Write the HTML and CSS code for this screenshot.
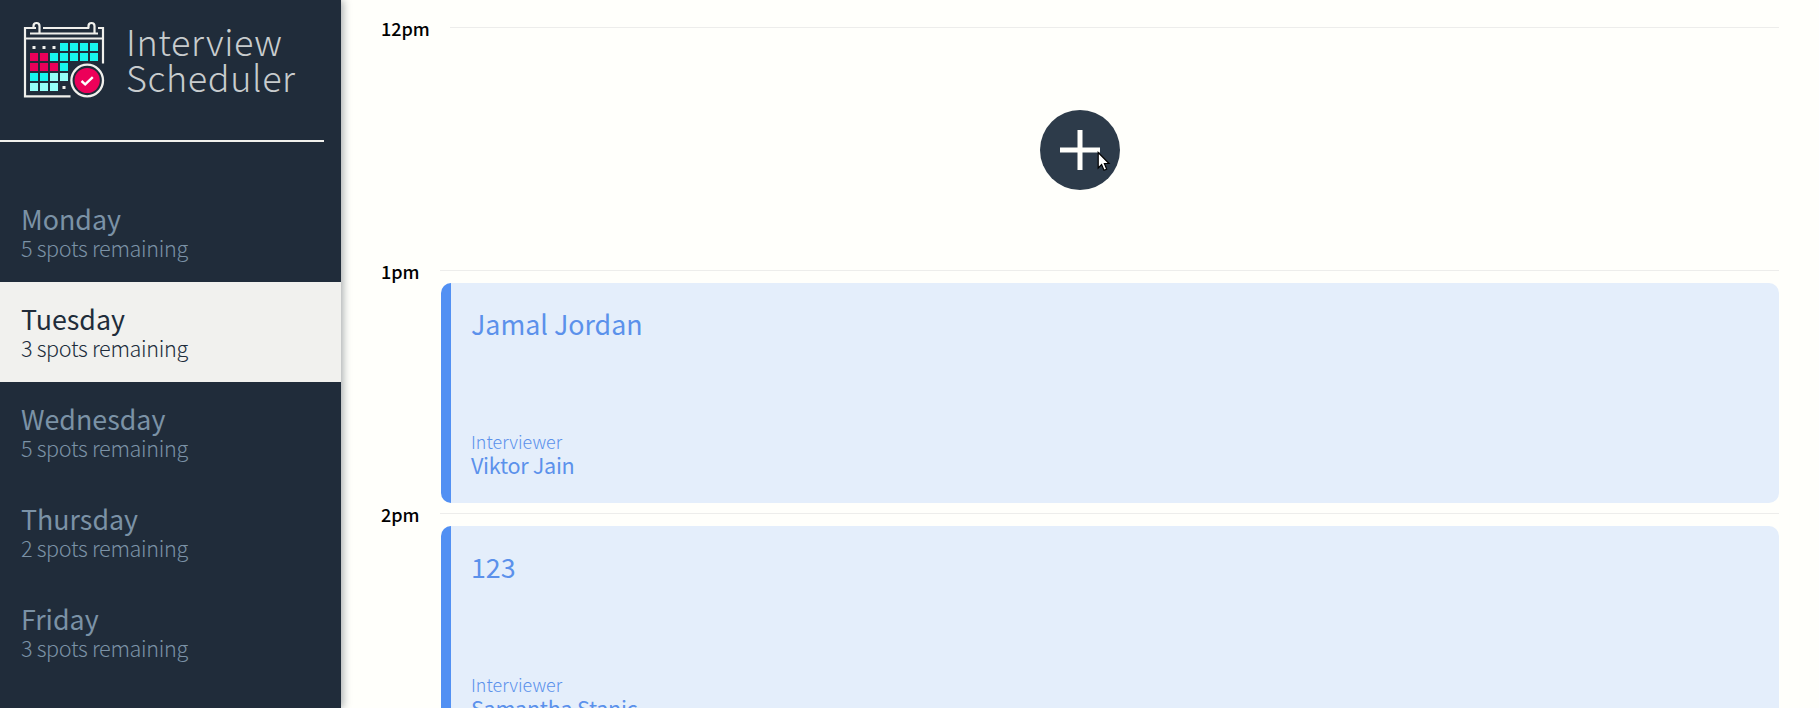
FILE: index.html
```html
<!DOCTYPE html>
<html lang="en">
<head>
<meta charset="utf-8">
<title>Interview Scheduler</title>
<link rel="stylesheet" href="styles.css">
</head>
<body>
<main class="layout">
  <section class="sidebar">
    <div class="logo">
      <svg class="logo-icon" width="82" height="78" viewBox="23 21 82 78">
        <g fill="none" stroke="#f0f0ec" stroke-width="2.200">
          <path d="M36 28H25V96.300H70.500M98 28H103V63.500M25 38.500H103"/>
          <path d="M43 28H89M30 33.500H98"/>
          <path d="M39.500 33V26A3 3 0 0 0 33.500 26V28.500M94.500 33V26A3 3 0 0 0 88.500 26V28.500"/>
        </g>
        <path fill="#f0f0ec" d="M32.500 46h3v3h-3zM42.500 46h3v3h-3zM52.500 46h3v3h-3zM62.500 86h3v3h-3z"/>
        <path fill="#17f5ed" d="M60 43h8v8h-8zM70 43h8v8h-8zM80 43h8v8h-8zM90 43h8v8h-8zM50 53h8v8h-8zM60 53h8v8h-8zM70 53h8v8h-8zM80 53h8v8h-8zM90 53h8v8h-8zM60 63h8v8h-8zM30 73h8v8h-8zM40 73h8v8h-8z"/>
        <path fill="#95fff9" d="M50 73h8v8h-8zM60 73h8v8h-8zM30 83h8v8h-8zM40 83h8v8h-8zM50 83h8v8h-8z"/>
        <path fill="#ec0059" d="M30 53h8v8h-8zM40 53h8v8h-8zM30 63h8v8h-8zM40 63h8v8h-8zM50 63h8v8h-8z"/>
        <circle cx="87.200" cy="80.500" r="17.500" fill="#202c3a"/>
        <circle cx="87.200" cy="80.500" r="15.800" fill="none" stroke="#f0f0ec" stroke-width="2.300"/>
        <circle cx="87.200" cy="80.500" r="12.600" fill="#ec0059"/>
        <path d="M81.500 81l3.700 3.300 7.600-7.100" fill="none" stroke="#fff" stroke-width="2.400"/>
      </svg>
      <div class="logo-text"><span>Interview</span><span>Scheduler</span></div>
    </div>
    <hr class="separator">
    <ul class="days">
      <li class="day"><h2 class="day-name">Monday</h2><p class="day-spots">5 spots remaining</p></li>
      <li class="day day-selected"><h2 class="day-name">Tuesday</h2><p class="day-spots">3 spots remaining</p></li>
      <li class="day"><h2 class="day-name">Wednesday</h2><p class="day-spots">5 spots remaining</p></li>
      <li class="day"><h2 class="day-name">Thursday</h2><p class="day-spots">2 spots remaining</p></li>
      <li class="day"><h2 class="day-name">Friday</h2><p class="day-spots">3 spots remaining</p></li>
    </ul>
  </section>
  <section class="schedule">
    <article class="slot">
      <header class="slot-time"><h4 class="time">12pm</h4><hr class="slot-line"></header>
      <div class="empty">
        <div class="add">
          <svg width="80" height="80" viewBox="0 0 80 80"><circle cx="40" cy="40" r="40" fill="#2d3b4a"/><path d="M20 40H60M40 20V60" stroke="#fffffb" stroke-width="5"/></svg>
          <svg class="cursor" width="14" height="22" viewBox="0 0 14 22"><path d="M1.200 1.500V17L4.600 13.500 7 19.300 9.700 18.200 7.400 12.500H12Z" fill="#fff" stroke="#000" stroke-width="1.200"/></svg>
        </div>
      </div>
    </article>
    <article class="slot">
      <header class="slot-time"><h4 class="time">1pm</h4><hr class="slot-line"></header>
      <div class="card"><h2 class="student">Jamal Jordan</h2><h4 class="role">Interviewer</h4><h3 class="interviewer">Viktor Jain</h3></div>
    </article>
    <article class="slot">
      <header class="slot-time"><h4 class="time">2pm</h4><hr class="slot-line"></header>
      <div class="card"><h2 class="student">123</h2><h4 class="role">Interviewer</h4><h3 class="interviewer">Samantha Stanic</h3></div>
    </article>
  </section>
</main>
</body>
</html>
```
FILE: styles.css
```css
* { box-sizing: border-box; margin: 0; padding: 0; }
body { background: #fffffb; font-family: "Noto Sans CJK SC", "Noto Sans", sans-serif; overflow: hidden; }
h2, h3, h4 { font-weight: 400; }
hr { border: 0; }
.layout { display: flex; height: 708px; overflow: hidden; }
.sidebar { width: 341px; flex: none; background: #202c3a; box-shadow: 2px 0 8px rgba(32, 44, 58, .4); }
.logo { display: flex; height: 140px; padding: 21px 0 0 23px; }
.logo-icon { flex: none; }
.logo-text { display: flex; flex-direction: column; margin: 1px 0 0 21px; font-size: 36px; line-height: 36px; font-weight: 300; color: #c8ccce; white-space: nowrap; letter-spacing: .6px; }
.separator { width: 324px; height: 2px; background: #f1f1ed; }
.days { list-style: none; margin-top: 40px; }
.day { height: 100px; padding: 21px 0 0 21px; color: #7b92a6; white-space: nowrap; }
.day-selected { background: #f1f1ee; color: #202c3a; }
.day-name { font-size: 26.8px; line-height: 31px; }
.day-spots { font-size: 21.6px; line-height: 28px; font-weight: 300; letter-spacing: -.33px; }
.schedule { flex: 1; padding: 15px 40px 0; }
.slot { height: 243px; }
.slot-time { display: flex; height: 25px; gap: 20px; }
.time { font-size: 18px; line-height: 26px; font-weight: 500; color: #000; }
.slot-line { flex: 1; height: 1px; margin-top: 12px; background: #ededeb; }
.empty { display: flex; justify-content: center; padding-top: 70px; height: 218px; }
.add { position: relative; width: 80px; height: 80px; }
.add svg { display: block; }
.add .cursor { position: absolute; left: 57px; top: 41px; }
.card { margin-left: 60px; height: 220px; background: #e4eefb; border-left: 10px solid #5290f3; border-radius: 10px; padding: 26px 20px 0; color: #5b91eb; }
.student { font-size: 26.8px; line-height: 30px; height: 117px; }
.role { font-size: 17.9px; line-height: 24px; font-weight: 300; margin-top: 3px; }
.interviewer { font-size: 21.6px; line-height: 24px; letter-spacing: -.3px; }
```
